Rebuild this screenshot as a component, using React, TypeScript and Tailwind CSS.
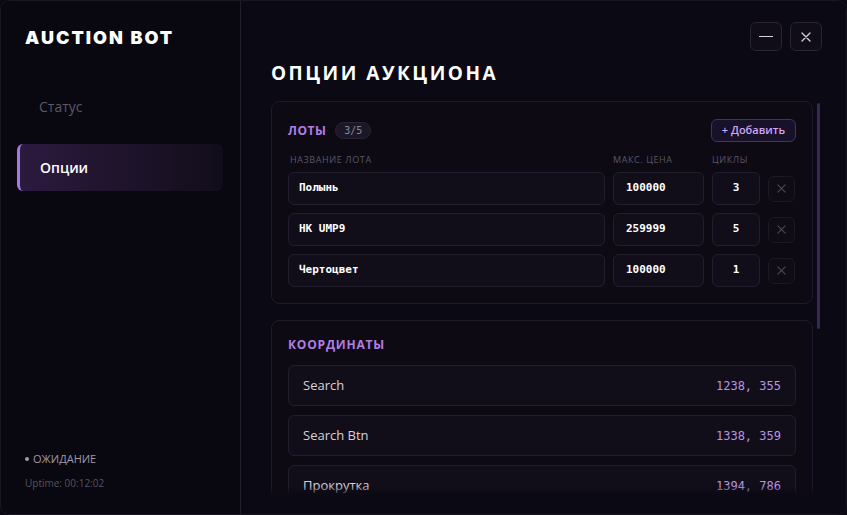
import React from 'react'

const lots = [
  { name: 'Полынь', price: '100000', cycles: '3' },
  { name: 'НК UMP9', price: '259999', cycles: '5' },
  { name: 'Чертоцвет', price: '100000', cycles: '1' },
]

const coords = [
  { label: 'Search', value: '1238, 355' },
  { label: 'Search Btn', value: '1338, 359' },
  { label: 'Прокрутка', value: '1394, 786' },
]

const mono = "font-['DejaVu_Sans_Mono','Liberation_Mono',monospace]"

const App = () => {
  return (
    <div className="w-[847px] h-[515px] bg-[#0a0811] font-['Open_Sans','Noto_Sans',sans-serif] overflow-hidden">
      <div className="flex w-full h-full rounded-[10px] border border-[#1a1622] overflow-hidden">
        {/* sidebar */}
        <div className="w-[240px] shrink-0 h-full bg-[#09070f] border-r border-[#221d2c] flex flex-col pt-[26px] pb-[24px]">
          <div className="pl-[24px] text-white text-[18px] font-black tracking-[2px] font-['Inter',sans-serif] leading-[22px]">
            AUCTION BOT
          </div>
          <div className="mt-[34px] flex flex-col gap-[14px] px-[16px]">
            <div className="h-[47px] flex items-center pl-[22px] text-[#5d5866] text-[14px]">Статус</div>
            <div className="h-[47px] w-[206px] flex items-center pl-[20px] text-white text-[14px] font-semibold rounded-md border-l-[3px] border-[#a777e0] bg-gradient-to-r from-[#2c1a3f] to-[#120d1a]">
              Опции
            </div>
          </div>
          <div className="mt-auto pl-[24px] flex flex-col gap-[11px]">
            <div className="flex items-center gap-[4px] text-[#a09aa8] text-[11px] leading-[14px]">
              <span className="w-[4px] h-[4px] rounded-full bg-[#a09aa8]"></span>
              ОЖИДАНИЕ
            </div>
            <div className="text-[#57525f] text-[10px] leading-[13px]">Uptime: 00:12:02</div>
          </div>
        </div>

        {/* main */}
        <div className="flex-1 h-full bg-[#0b0913] flex flex-col pl-[30px] pr-[24px] pt-[21px]">
          <div className="flex justify-end gap-[8px]">
            <button className="w-[32px] h-[29px] rounded-md border border-[#2a2434] bg-[#110d18] flex items-center justify-center">
              <span className="w-[14px] h-[1.5px] bg-[#d8d4de]"></span>
            </button>
            <button className="w-[32px] h-[29px] rounded-md border border-[#2a2434] bg-[#110d18] flex items-center justify-center">
              <svg width="12" height="12" viewBox="0 0 12 12" fill="none" stroke="#cfcad6" strokeWidth="1.4" strokeLinecap="round">
                <path d="M2 2L10 10M10 2L2 10" />
              </svg>
            </button>
          </div>
          <div className="mt-[9px] text-white text-[19px] font-bold tracking-[2.5px] leading-[26px]">ОПЦИИ АУКЦИОНА</div>

          <div className="relative mt-[15px] flex-1 min-h-0 overflow-hidden pr-[9px] mb-[20px]">
            <div className="flex flex-col gap-[16px]">
              {/* lots card */}
              <div className="rounded-lg border border-[#1f1a29] bg-[#0d0a14] px-[16px] pt-[17px] pb-[16px]">
                <div className="flex items-center justify-between">
                  <div className="flex items-center gap-[9px]">
                    <span className="text-[#b27ee6] text-[12px] font-bold tracking-[0.5px]">ЛОТЫ</span>
                    <span className={`px-[8px] h-[17px] rounded-full bg-[#1c1726] border border-[#2a2434] text-[#8d8797] text-[10px] flex items-center ${mono}`}>3/5</span>
                  </div>
                  <button className="h-[23px] px-[10px] rounded-md border border-[#463066] bg-[#18112a] text-[#cfa7f5] text-[11px] font-semibold">
                    + Добавить
                  </button>
                </div>
                <div className="mt-[12px] flex text-[#5b5665] text-[9px] tracking-[0.6px] leading-[12px]">
                  <div className="w-[325px] pl-[2px]">НАЗВАНИЕ ЛОТА</div>
                  <div className="w-[99px]">МАКС. ЦЕНА</div>
                  <div>ЦИКЛЫ</div>
                </div>
                <div className="mt-[6px] flex flex-col gap-[8px]">
                  {lots.map((l) => (
                    <div key={l.name} className="flex items-center gap-[8px]">
                      <div className={`w-[317px] h-[33px] rounded-md bg-[#120e19] border border-[#231e2d] flex items-center pl-[10px] text-white text-[11px] font-bold ${mono}`}>{l.name}</div>
                      <div className={`w-[91px] h-[33px] rounded-md bg-[#120e19] border border-[#231e2d] flex items-center pl-[12px] text-white text-[11px] font-bold ${mono}`}>{l.price}</div>
                      <div className={`w-[48px] h-[33px] rounded-md bg-[#120e19] border border-[#231e2d] flex items-center justify-center text-white text-[11px] font-bold ${mono}`}>{l.cycles}</div>
                      <div className="w-[27px] h-[26px] rounded-md bg-[#100c16] border border-[#1c1824] flex items-center justify-center">
                        <svg width="11" height="11" viewBox="0 0 12 12" fill="none" stroke="#4a4552" strokeWidth="1.3" strokeLinecap="round">
                          <path d="M2 2L10 10M10 2L2 10" />
                        </svg>
                      </div>
                    </div>
                  ))}
                </div>
              </div>

              {/* coords card */}
              <div className="rounded-lg border border-[#1f1a29] bg-[#0d0a14] px-[16px] pt-[16px] pb-[16px]">
                <div className="text-[#b27ee6] text-[12px] font-bold tracking-[0.8px] leading-[16px]">КООРДИНАТЫ</div>
                <div className="mt-[12px] flex flex-col gap-[9px]">
                  {coords.map((c) => (
                    <div key={c.label} className="h-[41px] rounded-md bg-[#120e19] border border-[#231e2d] flex items-center justify-between pl-[14px] pr-[14px]">
                      <span className="text-[#d6d2dc] text-[13px]">{c.label}</span>
                      <span className={`text-[#b794e4] text-[12px] ${mono}`}>{c.value}</span>
                    </div>
                  ))}
                </div>
              </div>
            </div>
            <div className="absolute left-0 right-[9px] bottom-0 h-[8px] bg-gradient-to-b from-transparent to-[#0b0913]/80"></div>
            <div className="absolute right-[2px] top-[2px] w-[3px] h-[226px] rounded-full bg-[#3a2858]"></div>
          </div>
        </div>
      </div>
    </div>
  )
}

export default App
